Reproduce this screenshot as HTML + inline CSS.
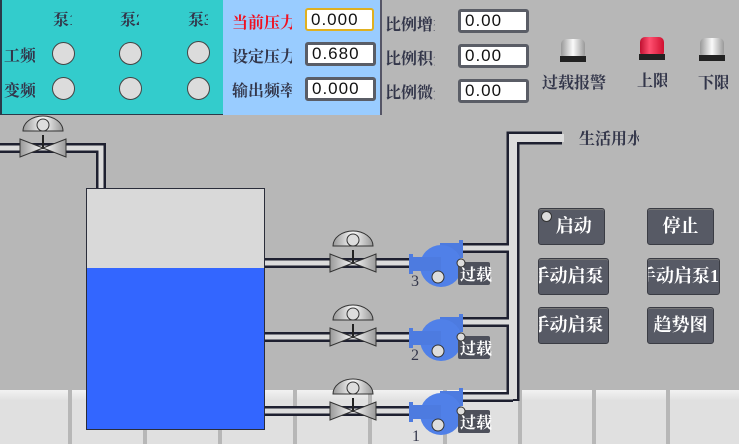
<!DOCTYPE html>
<html><head><meta charset="utf-8"><style>
body{margin:0;width:739px;height:444px;overflow:hidden;background:#b7b7b7;position:relative;font-family:"Liberation Serif","Noto Serif CJK SC",serif;}
.a{position:absolute;}
.t{position:absolute;white-space:nowrap;overflow:hidden;font-size:16px;font-weight:bold;color:#33364a;}
.in{position:absolute;width:61px;height:18px;background:#fff;border:3px solid #5a5d66;border-radius:3px;font-family:"Liberation Sans",sans-serif;font-size:17px;line-height:18px;padding-left:4px;color:#111;letter-spacing:1px}
.led{position:absolute;width:21px;height:21px;border-radius:50%;background:#dcdcdc;border:1px solid #444}
.btn{position:absolute;background:#575a65;border:1px solid #3a3c44;border-radius:3px;color:#fff;font-size:18px;font-weight:bold;text-align:center;overflow:hidden;white-space:nowrap;box-shadow:inset 0 1px 0 #777;}
.tile{position:absolute;top:390px;height:54px;background:linear-gradient(#f2f2f2,#e0e0e0 20%,#e0e0e0);}
</style></head><body>
<div class="tile" style="left:0;width:68px"></div>
<div class="tile" style="left:72px;width:71px"></div>
<div class="tile" style="left:147px;width:71px"></div>
<div class="tile" style="left:222px;width:71px"></div>
<div class="tile" style="left:297px;width:71px"></div>
<div class="tile" style="left:372px;width:71px"></div>
<div class="tile" style="left:447px;width:71px"></div>
<div class="tile" style="left:522px;width:70px"></div>
<div class="tile" style="left:596px;width:70px"></div>
<div class="tile" style="left:670px;width:69px"></div>

<div class="a" style="left:0;top:0;width:221px;height:114px;background:#33cccc;border:1px solid #2a3a4a;border-top:none;border-left:2px solid #2a3a4a"></div>
<div class="a" style="left:223px;top:0;width:157px;height:115px;background:#99ccff;border-right:2px solid #556"></div>
<div class="t" style="left:53px;top:7px;width:19px">泵1</div>
<div class="t" style="left:120px;top:7px;width:19px">泵2</div>
<div class="t" style="left:188px;top:7px;width:20px">泵3</div>
<div class="t" style="left:4px;top:43px;width:31px">工频</div>
<div class="t" style="left:4px;top:78px;width:31px">变频</div>
<div class="led" style="left:52px;top:42px"></div><div class="led" style="left:119px;top:42px"></div><div class="led" style="left:187px;top:41px"></div>
<div class="led" style="left:52px;top:77px"></div><div class="led" style="left:119px;top:77px"></div><div class="led" style="left:187px;top:77px"></div>

<div class="t" style="left:232px;top:10px;width:60px;color:#f01020">当前压力</div>
<div class="t" style="left:232px;top:44px;width:60px">设定压力</div>
<div class="t" style="left:232px;top:78px;width:60px">输出频率</div>
<div class="in" style="left:305px;top:8px;border-color:#e0b020;border-width:2px;padding-top:1px">0.000</div>
<div class="in" style="left:305px;top:42px">0.680</div>
<div class="in" style="left:305px;top:77px">0.000</div>

<div class="t" style="left:385px;top:12px;width:50px">比例增益</div>
<div class="t" style="left:385px;top:46px;width:50px">比例积分</div>
<div class="t" style="left:385px;top:80px;width:50px">比例微分</div>
<div class="in" style="left:458px;top:9px">0.00</div>
<div class="in" style="left:458px;top:44px">0.00</div>
<div class="in" style="left:458px;top:79px">0.00</div>

<svg class="a" style="left:0;top:0" width="739" height="444">
<defs>
<linearGradient id="g" x1="0" x2="1"><stop offset="0" stop-color="#999"/><stop offset=".5" stop-color="#fafafa"/><stop offset="1" stop-color="#999"/></linearGradient>
<linearGradient id="r" x1="0" x2="1"><stop offset="0" stop-color="#c01030"/><stop offset=".4" stop-color="#ff5070"/><stop offset="1" stop-color="#d01030"/></linearGradient>
</defs>
<g><rect x="561" y="39" width="24" height="20" rx="5" fill="url(#g)"/><rect x="560" y="56" width="26" height="6" fill="#222"/></g>
<g><rect x="640" y="37" width="24" height="20" rx="5" fill="url(#r)"/><rect x="639" y="54" width="26" height="6" fill="#222"/></g>
<g><rect x="700" y="38" width="24" height="20" rx="5" fill="url(#g)"/><rect x="699" y="55" width="26" height="6" fill="#222"/></g>
<g fill="none" stroke="#1e2030" stroke-width="10" stroke-linejoin="miter">
<path d="M0,148 H101 V190"/>
<path d="M265,263 H412 M265,337 H412 M265,411 H412"/>
<path d="M460,248 H513 M460,322 H513 M460,397 H513"/>
<path d="M513,401 V138 H562" stroke-width="13"/>
</g>
<g fill="none" stroke="#dcdcdc" stroke-width="5" stroke-linejoin="miter">
<path d="M0,148 H101 V192"/>
<path d="M265,263 H412 M265,337 H412 M265,411 H412"/>
<path d="M458,248 H513 M458,322 H513 M458,397 H513"/>
<path d="M513,399 V138 H564" stroke-width="8"/>
</g>
<rect x="86.5" y="188.5" width="178" height="241" fill="#d9d9d9" stroke="#2a2d3a"/>
<rect x="87" y="268" width="177" height="161" fill="#3366ff"/>
<g id="v">
<rect x="42" y="135" width="2" height="14" fill="#222"/>
<path d="M23,131 A20,15 0 0 1 63,131 Z" fill="url(#g)" stroke="#333"/>
<circle cx="43" cy="125" r="6" fill="#ddd" stroke="#333"/>
<path d="M20,139 L43,148 L20,157 Z M66,139 L43,148 L66,157 Z" fill="url(#g)" stroke="#333"/>
</g>
<use href="#v" x="310" y="115"/>
<use href="#v" x="310" y="189"/>
<use href="#v" x="310" y="263"/>
<g id="p">
<rect x="440" y="243" width="20" height="12" fill="#4d7be0"/>
<rect x="459" y="240" width="4" height="18" fill="#4d7be0"/>
<circle cx="441" cy="266" r="21" fill="#5080e8"/>
<rect x="411" y="257" width="30" height="14" fill="#4d7be0"/>
<rect x="409" y="254" width="4" height="20" fill="#4d7be0"/>
<circle cx="438" cy="277" r="6" fill="#ddd" stroke="#333"/>
<rect x="458" y="262" width="32" height="23" rx="2" fill="#4d505b"/>
<text x="460" y="280" fill="#fff" font-size="16" font-weight="bold" font-family="Liberation Serif,Noto Serif CJK SC,serif">过载</text>
<circle cx="461" cy="263" r="4" fill="#ddd" stroke="#333"/>
</g>
<use href="#p" y="74"/>
<use href="#p" y="148"/>
<text x="411" y="286" font-size="16" fill="#33364a" font-family="Liberation Serif,serif">3</text>
<text x="411" y="360" font-size="16" fill="#33364a" font-family="Liberation Serif,serif">2</text>
<text x="412" y="441" font-size="16" fill="#33364a" font-family="Liberation Serif,serif">1</text>
</svg>
<div class="t" style="left:542px;top:70px">过载报警</div>
<div class="t" style="left:637px;top:68px;width:30px">上限</div>
<div class="t" style="left:698px;top:70px;width:30px">下限</div>
<div class="t" style="left:579px;top:126px;width:60px">生活用水</div>

<div class="btn" style="left:538px;top:208px;width:65px;height:35px;line-height:35px">&nbsp;启动<span style="position:absolute;left:2px;top:2px;width:9px;height:9px;border-radius:50%;background:#ddd;border:1px solid #333"></span></div>
<div class="btn" style="left:647px;top:208px;width:65px;height:35px;line-height:35px">停止</div>
<div class="btn" style="left:538px;top:258px;width:69px;height:35px;line-height:35px;text-indent:-12px">手动启泵</div>
<div class="btn" style="left:647px;top:258px;width:71px;height:35px;line-height:35px;text-indent:-10px">手动启泵1</div>
<div class="btn" style="left:538px;top:307px;width:69px;height:35px;line-height:35px;text-indent:-12px">手动启泵</div>
<div class="btn" style="left:647px;top:307px;width:65px;height:35px;line-height:35px">趋势图</div>
</body></html>
